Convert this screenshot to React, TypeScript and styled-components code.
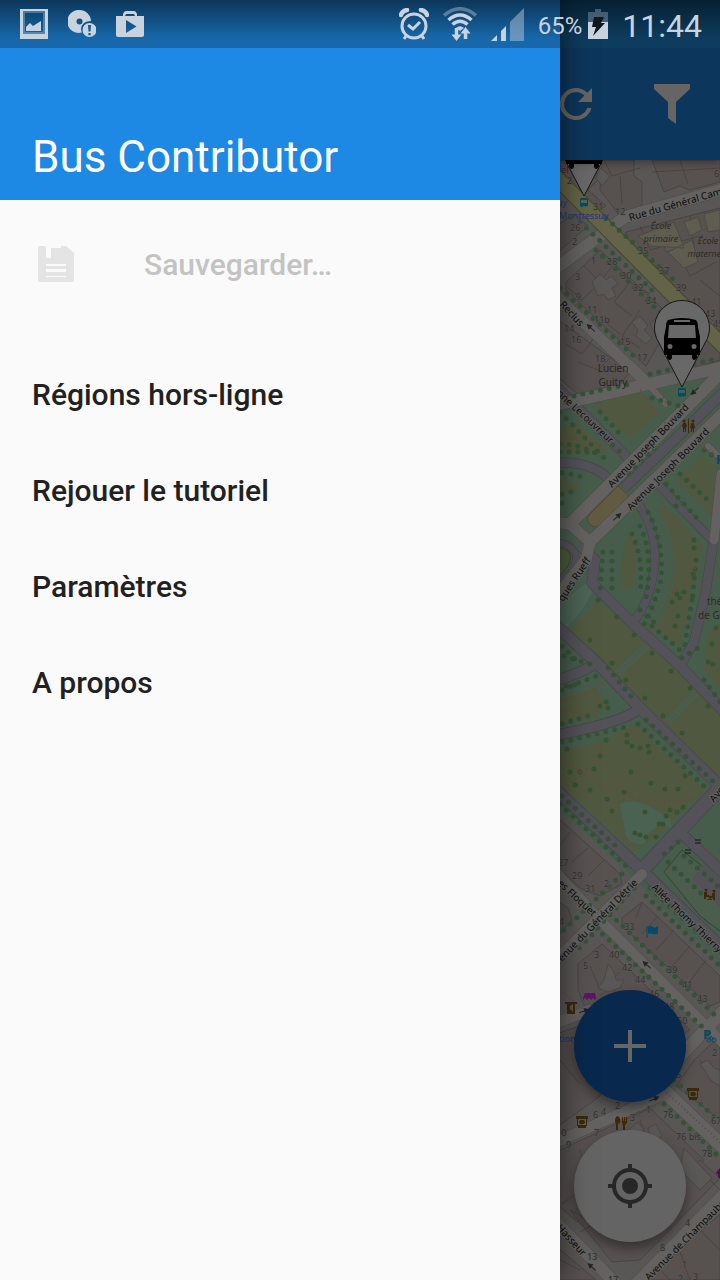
import React from "react";
import styled, { createGlobalStyle } from "styled-components";

const GlobalStyle = createGlobalStyle`
  *, *::before, *::after { box-sizing: border-box; }
  body { margin: 0; background: #fafafa; font-family: Roboto, "Noto Sans", sans-serif; }
  button { font: inherit; border: 0; padding: 0; margin: 0; cursor: pointer; }
  svg { display: block; }
`;

const Screen = styled.div`
  position: relative;
  display: flex;
  flex-direction: column;
  min-height: 100vh;
  overflow: hidden;
`;

/* ---------- status bar ---------- */

const StatusBar = styled.div`
  position: absolute;
  inset: 0 0 auto 0;
  z-index: 3;
  height: 48px;
  padding: 0 18px 0 20px;
  display: flex;
  align-items: center;
  justify-content: space-between;
  color: #c9d3de;
  background: linear-gradient(rgba(0, 0, 0, 0.48), rgba(0, 0, 0, 0) 80%);
`;

const StatusGroup = styled.div<{ $gap: number }>`
  display: flex;
  align-items: center;
  gap: ${(p) => p.$gap}px;
  height: 48px;
`;

const BatteryLevel = styled.span`
  font-size: 24px;
  line-height: 28px;
  padding-top: 4px;
`;

const Clock = styled.time`
  font-size: 32px;
  line-height: 40px;
  padding-top: 4px;
`;

/* ---------- screen behind the drawer ---------- */

const AppBar = styled.header`
  position: relative;
  z-index: 1;
  display: flex;
  align-items: center;
  justify-content: flex-end;
  gap: 48px;
  height: 160px;
  padding: 48px 24px 0;
  background: linear-gradient(#0d3c5e 48px, #0c365b 48px);
  box-shadow: 0 2px 8px rgba(0, 0, 0, 0.4);
`;

const BarAction = styled.button`
  width: 48px;
  height: 48px;
  background: transparent;
  color: #666564;
`;

const MapArea = styled.main`
  position: relative;
  flex: 1;
  display: flex;
  background: #5a5857;
`;

const MapCanvas = styled.svg`
  flex: 1;
  width: 100%;
  min-height: 100%;
`;

const FabStack = styled.div`
  position: absolute;
  right: 34px;
  bottom: 38px;
  display: flex;
  flex-direction: column;
  gap: 28px;
`;

const Fab = styled.button<{ $tone: string; $ink: string }>`
  display: flex;
  align-items: center;
  justify-content: center;
  width: 112px;
  height: 112px;
  border-radius: 50%;
  background: ${(p) => p.$tone};
  color: ${(p) => p.$ink};
  box-shadow: 0 6px 12px rgba(0, 0, 0, 0.4);
`;

/* ---------- drawer ---------- */

const Drawer = styled.aside`
  position: absolute;
  inset: 0 auto 0 0;
  z-index: 2;
  width: min(560px, calc(100% - 112px));
  background: #fafafa;
  box-shadow: 0 0 28px rgba(0, 0, 0, 0.6);
`;

const DrawerHeader = styled.div`
  display: flex;
  align-items: flex-end;
  height: 200px;
  padding: 0 32px 16px;
  background: linear-gradient(#1767aa 48px, #1e88e5 48px);
`;

const DrawerTitle = styled.h1`
  margin: 0;
  color: #fff;
  font-size: 44px;
  line-height: 54px;
  font-weight: 400;
`;

const MenuGroup = styled.nav<{ $top: number }>`
  display: flex;
  flex-direction: column;
  padding-top: ${(p) => p.$top}px;
`;

const MenuItem = styled.button`
  display: flex;
  align-items: center;
  gap: 64px;
  height: 96px;
  padding: 0 32px;
  background: transparent;
  color: #212121;
  font-size: 30px;
  line-height: 36px;
  font-weight: 500;
  text-align: left;

  &:disabled { color: #c3c3c3; }
`;

const MenuLabel = styled.span`
  padding-top: 2px;
`;

/* ---------- icons ---------- */

const PictureIcon = () => (
  <svg width="28" height="30" viewBox="0 0 28 30" fill="currentColor">
    <path fillRule="evenodd" d="M0 0H28V30H0Z M3 2V25H25V2Z" />
    <path fillRule="evenodd" opacity=".35" d="M3 2H25V25H3ZM5 4V23H23V4Z" />
    <path d="M6 22V18l4-4 3 3 8-5v10z" />
  </svg>
);

const DiscIcon = () => (
  <svg width="28" height="28" viewBox="0 0 28 28" fill="currentColor">
    <path fillRule="evenodd" d="M11.500 0A11.500 11.500 0 0 1 23 11Q14 11 13 19Q13 21 14 22.500A11.500 11.500 0 1 1 11.500 0ZM11.500 8.500A3 3 0 1 0 11.500 14.500A3 3 0 1 0 11.500 8.500Z" />
    <path fillRule="evenodd" d="M21.500 13A7 7 0 1 1 21.500 27A7 7 0 1 1 21.500 13ZM20 15L20.500 21.500H22.500L23 15ZM20.300 23V25.300H22.700V23Z" />
  </svg>
);

const StoreIcon = () => (
  <svg width="28" height="28" viewBox="0 0 28 28" fill="currentColor">
    <path fillRule="evenodd" d="M7 6V4Q8 1 10 1H18Q20 1 21 4V6H28V25Q28 27 26 27H2Q0 27 0 25V6ZM9 6H19L18 4H10ZM10 10V23L20.500 16.500Z" />
  </svg>
);

const AlarmIcon = () => (
  <svg width="30" height="32" viewBox="0 0 30 32" fill="none" stroke="currentColor">
    <circle cx="15" cy="18" r="12" strokeWidth="3" />
    <path d="M9 17l5 4 7-7" strokeWidth="3" />
    <path d="M2 7q1-4 6-5M28 7q-1-4-6-5" strokeWidth="4.500" strokeLinecap="round" />
    <path d="M7 28l-2 3M23 28l2 3" strokeWidth="3" />
  </svg>
);

const WifiIcon = () => (
  <svg width="34" height="34" viewBox="0 0 34 34" fill="none" stroke="currentColor">
    <path d="M1 8.500Q17-5 33 8.500" strokeWidth="3.500" opacity=".4" />
    <path d="M5.500 13Q17 3 28.500 13M9.500 17.500Q17 11 24.500 17.500" strokeWidth="3.500" />
    <path d="M13 21Q17 17.500 21 21L17 24Z" fill="currentColor" stroke="none" />
    <path d="M13.500 21v8M22.500 32v-9" strokeWidth="3.500" />
    <path d="M8.500 27.500h10L13.500 34zM17.500 26.500L22.500 20l5 6.500z" fill="currentColor" stroke="none" />
  </svg>
);

const SignalIcon = () => (
  <svg width="33" height="33" viewBox="0 0 33 33" fill="currentColor">
    <path d="M0 33L6 27V33ZM10 33V23L15 18V33Z" />
    <path d="M19 33V14L33 0V33Z" opacity=".45" />
  </svg>
);

const BatteryIcon = () => (
  <svg width="20" height="30" viewBox="0 0 20 30" fill="currentColor">
    <path d="M7 0h6v3h7v10H0V3h7z" opacity=".3" />
    <path d="M0 13h20v17H0z" />
    <path d="M6 8h10l-3 6h4L5 27l3-9H4z" fill="#11181d" />
  </svg>
);

const SaveIcon = () => (
  <svg width="48" height="48" viewBox="0 0 48 48" fill="#e4e4e4">
    <path fillRule="evenodd" d="M8 6H12Q14 6 14 8V18H30Q29 18 29 17V6H34L42 13V40Q42 42 40 42H8Q6 42 6 40V8Q6 6 8 6ZM14 24V37H34V24Z" />
    <path d="M19 8h10v10H19zM14 26h20v3H14zM14 32h20v4H14z" />
  </svg>
);

const RefreshIcon = () => (
  <svg width="48" height="48" viewBox="0 0 24 24" fill="currentColor">
    <path d="M17.650 6.350A7.960 7.960 0 0 0 12 4a8 8 0 1 0 7.730 10h-2.080A6 6 0 1 1 12 6c1.660 0 3.140.69 4.220 1.780L13 11h7V4z" />
  </svg>
);

const FilterIcon = () => (
  <svg width="48" height="48" viewBox="0 0 48 48" fill="currentColor">
    <path d="M6 4H42V9L28 22V44L20 38V22L6 9Z" />
  </svg>
);

const PlusIcon = () => (
  <svg width="48" height="48" viewBox="0 0 48 48" fill="currentColor">
    <path d="M22 8h4v14h14v4H26v14h-4V26H8v-4h14z" />
  </svg>
);

const LocateIcon = () => (
  <svg width="48" height="48" viewBox="0 0 24 24" fill="currentColor">
    <path d="M12 8a4 4 0 1 0 0 8 4 4 0 0 0 0-8zm8.940 3A8.990 8.990 0 0 0 13 3.060V1h-2v2.060A8.990 8.990 0 0 0 3.060 11H1v2h2.060A8.990 8.990 0 0 0 11 20.940V23h2v-2.060A8.990 8.990 0 0 0 20.940 13H23v-2h-2.060zM12 19a7 7 0 1 1 0-14 7 7 0 0 1 0 14z" />
  </svg>
);

/* ---------- map ---------- */

const blocks = [
  "M556 160H586L600 178 588 190 606 206 588 216 574 198 556 184Z",
  "M602 160H634V176L642 182V210L620 216 600 190Z",
  "M652 160H720V182L690 190 680 186 664 192Z",
  "M556 226L574 214 588 226 556 254Z",
  "M566 282L600 250 664 310 650 324 660 342 646 366 566 290Z",
  "M626 232L720 208V326L690 304 626 242Z",
  "M556 318L630 372 620 384 578 394 556 376Z",
  "M694 368L690 346 720 322V360Z",
  "M556 816L620 874 622 884 600 896 580 888 556 866Z",
  "M556 900L568 908 572 920 556 938Z",
  "M556 1034L580 1026 604 1050 600 1096 556 1128Z",
  "M622 918L642 902 720 976V1002L710 1006 622 926Z",
  "M578 964L602 944 640 980 690 1030 640 1060 590 1020 578 990Z",
  "M694 1060L720 1036V1120L676 1086Z",
  "M556 1152L650 1108 704 1160 668 1200 600 1240 556 1204Z",
  "M570 1210L624 1240 654 1206 700 1160 720 1178 640 1260 612 1262Z",
  "M650 1276L720 1214V1280H650Z",
  "M556 1246L596 1280H556Z",
];

const partitions =
  "M566 286L582 300 600 282 584 266M600 250L614 264 598 284M614 264L630 282 614 302 632 316M630 282L650 294M582 300L570 310M600 318L620 334M640 310L622 336 640 348M594 338L582 354 566 344M612 356L598 370 578 362M604 160L612 176 640 168M620 176L622 204M680 160L688 184M652 172L720 168M640 226L650 250 700 236M664 222L672 240M690 216L696 262M676 250L690 276 716 262M700 280L720 296M570 832L558 848M588 848L572 862M604 860L588 876M642 902L636 918M658 916L642 934M674 930L656 950M690 946L672 966M706 960L688 984M590 966L600 990 620 972M610 990L640 996M600 1010L620 1020M700 1060L712 1080M580 1150L590 1180M610 1140L620 1160M640 1120L650 1150M660 1136L640 1166M690 1160L720 1190M580 1190L562 1204M600 1220L580 1232M620 1230L640 1246M680 1252L690 1280M700 1230L720 1250M660 1270L670 1280M570 1040L590 1060M560 1060L580 1084M560 1260L580 1270";

const courtyards = [
  "M592 282l8-8 6 6 6-4 6 8-6 4 4 8-8 4-4-6-6 2z",
  "M632 322l8-6 8 10-4 4 8 8-6 6-10-8 2-6z",
  "M604 980l4-16 6 8 2 8h8l-4 8-12 4-10-4z",
  "M700 1064l8-4 6 8 6 2v16l-10-6-4-8z",
  "M648 1128l8-4 6 12-10 6z",
  "M600 168l10 8-8 10-6-8z",
  "M662 240l16-4v12l-12 4z",
  "M684 1148l28 30-12 12-20-20z",
  "M626 1132l12-10 6 8-10 12z",
];

const lawns = [
  "M593 403L640 393Q650 396 658 413L630 439Z",
  "M556 430L578 424 608 452 586 456 556 446Z",
  "M677 480L702 456 722 470 713 518Z",
  "M626 540Q634 532 637 541L636 578Q628 598 623 588Q618 576 626 540Z",
  "M560 480L580 484 576 492 556 494Z",
  "M662 508Q674 512 686 526L703 546 694 586 Q686 590 690 600L680 646Q668 640 656 630Q676 594 676 560Q672 530 658 512Z",
  "M597 600L676 668 724 712V782L645 706 597 660 566 630Q586 618 597 600Z",
  "M706 640L720 620V690L704 670Z",
  "M556 700L596 688 608 704 596 716 556 726Z",
  "M634 724Q646 728 650 740L706 790 650 842 634 852 556 780V752L602 742Z",
];

const walkways: [string, number][] = [
  ["M552 382L630 460", 9],
  ["M624 488L724 392", 10],
  ["M652 478L712 540", 8],
  ["M713 544L706 590 694 642 680 666", 9],
  ["M552 463Q588 460 608 478", 9],
  ["M637 502Q656 528 655 560Q652 600 633 622", 8],
  ["M580 545L595 560 592 583 631 622 680 666 724 712", 10],
  ["M552 622L597 663 640 708 724 790", 11],
  ["M597 663Q576 676 552 681", 10],
  ["M640 708Q626 722 552 736", 10],
  ["M552 786L630 859 724 950", 11],
  ["M724 784L677 833 644 868", 14],
  ["M682 834L724 874", 10],
  ["M556 542Q576 544 576 560Q574 574 556 584", 6],
];

const streets: [string, number][] = [
  ["M552 271L605 232 625 217 724 189", 12],
  ["M552 292L648 384", 11],
  ["M552 406L724 367", 12],
  ["M648 384L666 404", 6],
  ["M570 524L724 370", 12],
  ["M590 542L724 412", 11],
  ["M552 522L570 524 590 542 586 560 552 602", 11],
  ["M708 446L722 460", 6],
  ["M721 474L714 540", 9],
  ["M642 874L552 964", 10],
  ["M552 868L600 920 724 1044", 10],
  ["M552 1024L580 1014 590 1010", 11],
  ["M724 1010L650 1088", 12],
  ["M552 1144L660 1096", 11],
  ["M655 1082L724 1148", 14],
  ["M724 1194L630 1290", 12],
  ["M552 1218L620 1288", 12],
];

const treeRows = [
  "M606 218L676 282", "M580 222L654 292", "M560 288L636 358", "M596 250L664 316",
  "M574 396L630 384", "M650 374L720 358", "M560 396L620 452", "M560 412L606 460",
  "M600 412L622 436", "M652 398L680 406", "M560 444Q582 444 600 456",
  "M562 473Q576 474 584 478", "M560 452L590 452", "M654 448L626 476",
  "M632 534Q644 560 640 594", "M640 526Q654 554 646 598", "M648 512Q666 548 660 584Q650 616 644 624",
  "M666 484L702 524", "M680 474L712 504", "M704 450L720 460", "M612 552L612 590", "M603 552L600 590",
  "M562 646L576 660", "M564 656L590 664", "M562 690Q584 680 602 674", "M566 686L580 684",
  "M608 668L634 700", "M562 742L630 726", "M638 724L706 788", "M646 720L714 782",
  "M560 804L626 866", "M562 796L620 850", "M650 888L720 954", "M646 896L718 964",
  "M678 842L662 856", "M668 862L704 896", "M684 856L720 888", "M622 874L562 932",
  "M634 888L576 952", "M610 914L720 1020", "M596 928L710 1034", "M674 1080L720 1122",
  "M664 1104L716 1154", "M696 560L692 602", "M704 680L720 702", "M640 610L656 624",
  "M682 658L698 648", "M652 626L680 650", "M692 600L684 650", "M562 724L588 716",
];

const looseTrees = [
  [612, 663], [626, 680], [645, 698], [663, 716], [682, 733], [598, 600],
  [617, 617], [634, 635], [652, 653], [671, 671], [690, 688], [708, 706], [600, 706], [606, 702],
  [608, 708], [627, 735], [627, 742], [632, 746], [640, 748], [648, 746], [649, 752], [606, 740],
  [600, 756], [567, 749], [575, 785], [594, 769], [631, 772], [651, 783], [665, 789], [678, 789],
  [685, 776], [590, 790], [607, 799], [624, 792], [612, 811], [645, 812], [659, 824], [663, 824],
  [635, 833], [640, 835], [646, 837], [656, 837], [666, 816], [670, 810], [677, 812], [683, 807],
  [677, 594], [672, 602], [680, 598], [684, 592], [675, 626], [678, 616], [676, 506], [694, 540],
  [694, 548], [693, 574], [712, 644], [708, 662], [713, 664], [716, 628], [580, 772], [570, 772],
  [590, 640], [562, 494], [571, 492], [562, 503],
];

const footpaths = [
  "M560 437Q590 440 616 450", "M650 486Q674 510 674 560Q672 600 652 634",
  "M674 546Q684 560 702 574", "M672 592Q690 580 720 578", "M640 390L662 420 674 432",
  "M658 388L670 410", "M648 645L617 674", "M697 692L668 722", "M560 701Q590 696 606 678",
  "M560 710Q584 712 590 722", "M597 690L597 718", "M599 732L600 748Q588 774 566 786",
  "M560 756Q600 790 632 798Q680 808 714 790", "M600 746Q610 782 634 798",
  "M700 444L720 462", "M700 844L720 862", "M706 634Q714 630 720 630", "M670 1256L692 1280",
];

const houseNumbers: [number, number, string][] = [
  [567, 184, "2"], [593, 210, "31"], [615, 215, "12"], [570, 231, "26"],
  [572, 245, "2"], [714, 177, "6"], [591, 264, "1"], [607, 265, "28"], [575, 280, "3"],
  [621, 279, "30"], [638, 254, "35"], [659, 274, "37"], [633, 291, "32"], [676, 291, "39"],
  [576, 300, "9"], [646, 304, "34"], [691, 305, "41"], [705, 317, "43"], [587, 313, "11"],
  [594, 323, "11b"], [564, 332, "14"], [571, 343, "16"], [620, 345, "15"], [713, 327, "45"],
  [595, 362, "18"], [637, 361, "17"], [558, 866, "27"], [572, 879, "29"], [585, 892, "31"],
  [604, 887, "2"], [559, 925, "4"], [624, 930, "33"], [594, 958, "3"], [609, 958, "40"],
  [583, 969, "5"], [622, 971, "42"], [635, 983, "44"], [649, 997, "46"], [667, 973, "39"],
  [682, 988, "41"], [697, 1002, "43"], [664, 1010, "48"], [677, 1024, "50"], [712, 1056, "2"],
  [676, 1078, "5"], [615, 1109, "2"], [601, 1115, "4"], [593, 1118, "6"], [594, 1136, "7"],
  [630, 1121, "3"], [646, 1113, "1"], [663, 1118, "76"], [711, 1124, "67"], [676, 1140, "76 bis"],
  [702, 1157, "78"], [566, 1148, "9"], [556, 1136, "10"], [685, 1226, "4"], [660, 1251, "8"],
  [587, 1260, "13"], [608, 1283, "17"], [682, 1268, "1"], [678, 1282, "2"], [693, 1280, "3"],
];

const streetNames: [number, number, number, string][] = [
  [630, 221, -16, "Rue du Général Camou"],
  [559, 305, 47, "Reclus"],
  [556, 394, 43, "nne Lecouvreur"],
  [612, 488, -46, "Avenue Joseph Bouvard"],
  [631, 511, -45, "Avenue Joseph Bouvard"],
  [563, 602, -56, "ques Rueff"],
  [714, 803, -50, "Ave"],
  [557, 884, 43, "es Floquet"],
  [562, 962, -46, "enue du Général Détrie"],
  [651, 888, 44, "Allée Thomy Thierry"],
  [649, 1281, -45, "Avenue de Champaubert"],
  [556, 1228, 48, "Hasseur"],
];

const BusPin = ({ x, y }: { x: number; y: number }) => (
  <g transform={`translate(${x} ${y})`}>
    <path d="M0 0L-23 -44A27.500 27.500 0 1 1 23 -44Z" fill="#686868" stroke="#161616" strokeWidth="1" />
    <path
      fillRule="evenodd"
      fill="#000"
      d="M-14 -67Q0 -71 14 -67Q16 -65 16 -60L18 -50V-32H15V-29Q12 -25 10 -29V-32H-10V-29Q-12 -25 -15 -29V-32H-18V-50L-16 -60Q-16 -65 -14 -67ZM-8 -67V-65H8V-67ZM-13 -62L-14 -49H14L13 -62ZM-12 -43A2.500 2.500 0 1 0 -12 -38A2.500 2.500 0 1 0 -12 -43ZM12 -43A2.500 2.500 0 1 0 12 -38A2.500 2.500 0 1 0 12 -43Z"
    />
  </g>
);

const StopMark = ({ x, y }: { x: number; y: number }) => (
  <path
    transform={`translate(${x} ${y})`}
    fillRule="evenodd"
    fill="#064a68"
    d="M-3 -4H3L4 -3V4H2V5H1V4H-1V5H-3V4H-4V-3ZM-3 -2V1H3V-2Z"
  />
);

const DirectionArrow = ({ x, y, angle }: { x: number; y: number; angle: number }) => (
  <path
    transform={`translate(${x} ${y}) rotate(${angle})`}
    d="M-5 0H2M1 -2L5 0 1 2Z"
    stroke="#252525"
    fill="#252525"
    strokeWidth="1"
  />
);

const CafeMark = ({ x, y }: { x: number; y: number }) => (
  <path
    transform={`translate(${x} ${y})`}
    fillRule="evenodd"
    fill="#3d2808"
    d="M-6 -6H6V-3H5V4H4V6H-4V4H-5V-3H-6ZM-4 -3V3H4V-3ZM-2 -2H2L3 0 2 2H-2L-3 0Z"
  />
);

const CityMap = () => (
  <MapCanvas viewBox="0 160 720 1120" preserveAspectRatio="xMaxYMin slice" role="img" aria-label="Plan du quartier">
    <rect y="160" width="720" height="1120" fill="#595756" />
    <g fill="#575150" stroke="#4a4441" strokeWidth="1">
      {blocks.map((d) => <path key={d} d={d} />)}
      <path d={partitions} fill="none" />
    </g>
    <g fill="#5a5857" stroke="#4c4744" strokeWidth="1">
      {courtyards.map((d) => <path key={d} d={d} />)}
    </g>
    <path d="M638 236L674 222 684 248 652 246ZM668 252L692 240 698 262 684 268ZM684 222L698 217 702 230 690 236ZM704 214L720 210V230L708 232Z" fill="#5e5d50" stroke="#4e4a43" />

    <path d="M552 386L576 404 724 368V966L650 896 640 884 552 802Z" fill="#475d4c" />
    <path d="M684 425L724 392V500L700 470Z" fill="#475d4c" />
    <path d="M552 610L597 575Q594 600 566 628L552 616Z" fill="#4b6455" />
    <g fill="#50593f">
      {lawns.map((d) => <path key={d} d={d} />)}
    </g>
    <path d="M620 804Q632 798 648 806L670 818 672 828 660 824 650 832 644 844Q626 846 624 826Z" fill="#4a6252" />
    <path d="M664 872L682 850 724 884V934L700 916Z" fill="#4b5d4c" stroke="#364237" />
    <path d="M692 880L704 864 724 884V910Z" fill="#535157" />
    <path d="M552 582Q574 566 570 554Q566 546 552 548Z" fill="#4e5a3d" stroke="#3c4433" />
    <g stroke="#485e4d" strokeWidth="7">
      <path d="M648 645L617 674M697 692L668 722" />
    </g>

    <g fill="none" strokeLinejoin="round">
      {walkways.map(([d, w]) => <path key={d} d={d} stroke="#444247" strokeWidth={w + 1} />)}
      {walkways.map(([d, w]) => <path key={d} d={d} stroke="#545259" strokeWidth={w} />)}
    </g>
    <path d="M590 514L618 486 629 496 600 525Q594 530 588 522Q586 518 590 514Z" fill="#625a41" stroke="#504a33" />

    <g fill="none" strokeLinecap="round" strokeLinejoin="round">
      {streets.map(([d, w]) => <path key={d} d={d} stroke="#4d4c4b" strokeWidth={w + 1} />)}
      {streets.map(([d, w]) => <path key={d} d={d} stroke="#636261" strokeWidth={w} />)}
      <path d="M548 169L728 351" stroke="#454a22" strokeWidth="16" />
      <path d="M548 169L728 351" stroke="#626347" strokeWidth="14" />
    </g>

    <g fill="none" stroke="#355238" strokeWidth="5" strokeLinecap="round" strokeDasharray="0 9">
      {treeRows.map((d) => <path key={d} d={d} />)}
    </g>
    <g fill="#355232">
      {looseTrees.map(([x, y]) => <circle key={`${x}-${y}`} cx={x} cy={y} r="2.500" />)}
    </g>
    <g fill="none" stroke="#70453f" strokeWidth="1.300" strokeDasharray="2 3">
      {footpaths.map((d) => <path key={d} d={d} />)}
      <path d="M664 1090L724 1146M560 990L586 1012" stroke="#5f4560" strokeDasharray="1 3" strokeWidth="2" />
    </g>

    <g fontFamily='"Noto Sans", sans-serif' fontSize="9" fill="#2e2c2b">
      <g fontSize="10" fill="#323130" stroke="#5c5958" strokeWidth="1" paintOrder="stroke">
        {houseNumbers.map(([x, y, n]) => <text key={`${x}-${y}`} x={x} y={y} fontSize="9">{n}</text>)}
      </g>
      <g fontSize="10" fill="#262624" textAnchor="middle">
        <text x="613" y="372">Lucien</text>
        <text x="613" y="386">Guitry</text>
        <g fontStyle="italic" fontSize="9" fill="#2d2b22">
          <text x="661" y="229">École</text>
          <text x="661" y="242">primaire</text>
          <text x="708" y="244">École</text>
          <text x="709" y="257">maternelle</text>
        </g>
      </g>
      <g fontSize="10" fill="#2a2b28">
        <text x="707" y="605">théâtre</text>
        <text x="698" y="619">de Guignol</text>
      </g>
      <g fill="#1c3874">
        <text x="557" y="206">uy</text>
        <text x="559" y="219">Monttessuy</text>
        <text x="559" y="1042">tion</text>
      </g>
      <text x="558" y="173" fill="#5e1238">fel</text>
      <g fontSize="10" fill="#0c0c0c" stroke="#636261" strokeWidth="2" paintOrder="stroke">
        {streetNames.map(([x, y, a, name]) => (
          <text key={`${x}-${y}`} transform={`translate(${x} ${y}) rotate(${a})`}>{name}</text>
        ))}
      </g>
      <text x="703" y="1039" fontSize="13" fontWeight="700" fill="#064a68">P</text>
      <text x="716" y="464" fontSize="12" fontWeight="700" fill="#064a68">P</text>
    </g>

    <DirectionArrow x={591} y={328} angle={222} />
    <DirectionArrow x={695} y={391} angle={138} />
    <DirectionArrow x={617} y={517} angle={-42} />
    <DirectionArrow x={647} y={965} angle={222} />
    <DirectionArrow x={584} y={1011} angle={-20} />
    <DirectionArrow x={654} y={1099} angle={-24} />
    <DirectionArrow x={592} y={1267} angle={222} />
    <path d="M695 840h6M695 843h6M685 850h6M685 853h6" stroke="#171717" />

    <StopMark x={584} y={202} />
    <StopMark x={682} y={392} />
    <path d="M647 938V926" stroke="#064a68" />
    <path d="M648 927q3-2 5 0t5-1v7q-2 2-5 1t-5 0z" fill="#064a68" />
    <g fill="none" stroke="#064a68"><circle cx="709" cy="1040" r="2" /><circle cx="714" cy="1040" r="2" /><path d="M709 1040l2-4 3 4" /></g>
    <g fill="#3d2808">
      <path d="M683 423h3l1 4h-1v5h-1v-3h-1v3h-1v-5h-1zM691 423h3l1 5h-1v4h-1v-3h-1v3h-1v-4h-1zM688 419h1v14h-1z" />
      <circle cx="684" cy="421" r="1.500" /><circle cx="693" cy="421" r="1.500" />
      <path d="M704 892h3v3h2v2h-3v2h-2zM715 893h-3v3h-2v2h3v2h2zM707 899h5v1h-5z" />
      <circle cx="706" cy="890" r="1.500" /><circle cx="714" cy="891" r="1.500" /><circle cx="710" cy="897" r="1.500" />
      <path fillRule="evenodd" d="M565 1002H577V1004H575V1014H567V1004H565ZM570 1006V1009L573 1012V1004Z" />
      <path d="M616 1117q3-2 4 2t-2 5v6h-2v-6q-2-3 0-7zM622 1117h1v4h1v-4h1v4h1v-4h1v6l-2 2v5h-2v-5l-1-2z" />
    </g>
    <path d="M585 993h10l1 5-1 2-2-2-2 2-2-2-2 2-2-2-2 2v-2z" fill="#5c1760" />
    <path d="M717 1171l3-3v10h-2v-4h-2z" fill="#4a1350" />
    <CafeMark x={582} y={1122} />
    <CafeMark x={693} y={1094} />

    <BusPin x={584} y={196} />
    <BusPin x={682} y={387} />
  </MapCanvas>
);

/* ---------- page ---------- */

const menuEntries = ["Régions hors-ligne", "Rejouer le tutoriel", "Paramètres", "A propos"];

export default function App() {
  return (
    <>
      <GlobalStyle />
      <Screen>
        <StatusBar>
          <StatusGroup $gap={20}>
            <PictureIcon />
            <DiscIcon />
            <StoreIcon />
          </StatusGroup>
          <StatusGroup $gap={14}>
            <AlarmIcon />
            <WifiIcon />
            <SignalIcon />
            <StatusGroup $gap={6}>
              <BatteryLevel>65%</BatteryLevel>
              <BatteryIcon />
            </StatusGroup>
            <Clock>11:44</Clock>
          </StatusGroup>
        </StatusBar>

        <AppBar>
          <BarAction type="button" aria-label="Actualiser"><RefreshIcon /></BarAction>
          <BarAction type="button" aria-label="Filtrer"><FilterIcon /></BarAction>
        </AppBar>
        <MapArea>
          <CityMap />
          <FabStack>
            <Fab type="button" aria-label="Ajouter" $tone="#08284d" $ink="#666">
              <PlusIcon />
            </Fab>
            <Fab type="button" aria-label="Ma position" $tone="#646464" $ink="#272727">
              <LocateIcon />
            </Fab>
          </FabStack>
        </MapArea>

        <Drawer>
          <DrawerHeader>
            <DrawerTitle>Bus Contributor</DrawerTitle>
          </DrawerHeader>
          <MenuGroup $top={16}>
            <MenuItem type="button" disabled>
              <SaveIcon />
              <MenuLabel>Sauvegarder…</MenuLabel>
            </MenuItem>
          </MenuGroup>
          <MenuGroup $top={34}>
            {menuEntries.map((label) => (
              <MenuItem key={label} type="button">
                <MenuLabel>{label}</MenuLabel>
              </MenuItem>
            ))}
          </MenuGroup>
        </Drawer>
      </Screen>
    </>
  );
}
